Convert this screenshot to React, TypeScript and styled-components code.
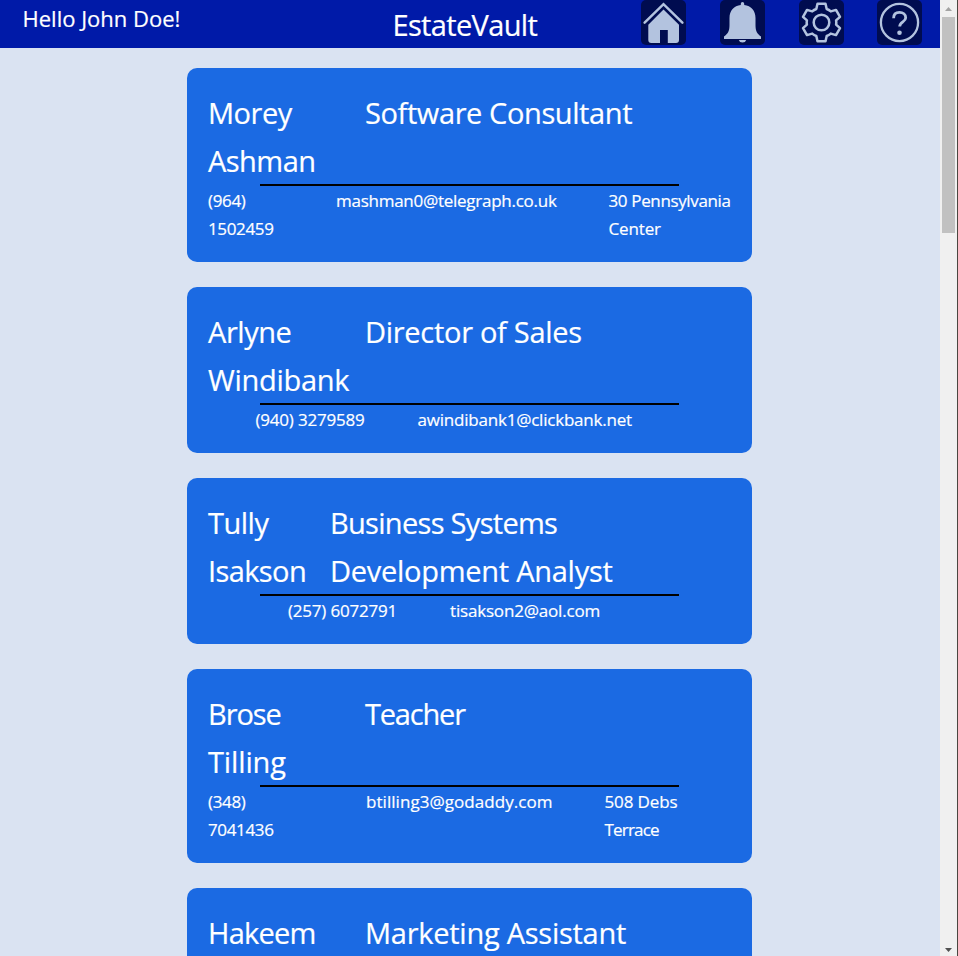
import React from 'react';
import styled, { createGlobalStyle } from 'styled-components';

type Line = [text: string, tracking: number];

interface Contact {
  name: Line[];
  role: Line[];
  phone: Line[];
  email: Line[];
  address?: Line[];
  headColumns: string;
  detailColumns: string;
  detailIndent: number;
}

const contacts: Contact[] = [
  {
    name: [['Morey', -0.47], ['Ashman', -0.53]],
    role: [['Software Consultant', -0.4]],
    phone: [['(964)', -0.33], ['1502459', -0.35]],
    email: [['mashman0@telegraph.co.uk', -0.26]],
    address: [['30 Pennsylvania', -0.36], ['Center', -0.15]],
    headColumns: '157px 1fr',
    detailColumns: '128px 272.5px 1fr',
    detailIndent: 0,
  },
  {
    name: [['Arlyne', -0.45], ['Windibank', -0.3]],
    role: [['Director of Sales', -0.29]],
    phone: [['(940) 3279589', -0.2]],
    email: [['awindibank1@clickbank.net', -0.21]],
    headColumns: '157px 1fr',
    detailColumns: '162px 1fr',
    detailIndent: 47.5,
  },
  {
    name: [['Tully', -0.5], ['Isakson', -0.6]],
    role: [['Business Systems', -0.7], ['Development Analyst', -0.27]],
    phone: [['(257) 6072791', -0.2]],
    email: [['tisakson2@aol.com', -0.18]],
    headColumns: '122px 1fr',
    detailColumns: '162px 1fr',
    detailIndent: 80,
  },
  {
    name: [['Brose', -1.1], ['Tilling', -0.13]],
    role: [['Teacher', -1.2]],
    phone: [['(348)', -0.33], ['7041436', -0.35]],
    email: [['btilling3@godaddy.com', 0.05]],
    address: [['508 Debs', -0.12], ['Terrace', -0.8]],
    headColumns: '157px 1fr',
    detailColumns: '158px 238.5px 1fr',
    detailIndent: 0,
  },
  {
    name: [['Hakeem', -0.75]],
    role: [['Marketing Assistant', -0.26]],
    phone: [],
    email: [],
    headColumns: '157px 1fr',
    detailColumns: '1fr',
    detailIndent: 0,
  },
];

const GlobalStyle = createGlobalStyle`
  body {
    margin: 0;
    overflow: hidden;
    background: #dae3f2;
    font-family: 'Open Sans', sans-serif;
    color: #fff;
    -webkit-text-stroke: 0.2px #fff;
  }
`;

const Shell = styled.div`
  display: grid;
  grid-template-columns: 940px 17px 1px;
  height: 956px;
  overflow: hidden;
`;

const Page = styled.div`
  display: flex;
  flex-direction: column;
  min-width: 0;
  height: 956px;
  overflow: hidden;
`;

const Header = styled.header`
  flex: none;
  display: grid;
  grid-template-columns: 370px 248.5px 281px;
  height: 48px;
  padding-left: 22.5px;
  box-sizing: border-box;
  background: #001aa8;
`;

const Greeting = styled.div`
  font-size: 22px;
  line-height: 36px;
`;

const Brand = styled.h1`
  margin: 0;
  font-size: 29px;
  font-weight: 400;
  line-height: 48px;
  letter-spacing: -0.66px;
  padding-top: 1px;
`;

const Nav = styled.nav`
  display: grid;
  grid-template-columns: 79px 79px 78px 45px;
`;

const NavButton = styled.button`
  width: 45px;
  height: 45px;
  padding: 0;
  border: 0;
  border-radius: 5px;
  background: #000c50;
  color: #b3c3df;

  svg {
    display: block;
  }
`;

const List = styled.main`
  display: flex;
  flex-direction: column;
  gap: 25px;
  padding: 20px 188px 0 187px;
`;

const Card = styled.article`
  flex: none;
  padding: 21px 20px 19px 21px;
  border-radius: 10px;
  background: #1b6ae3;
`;

const CardHead = styled.div<{ $columns: string }>`
  display: grid;
  grid-template-columns: ${(p) => p.$columns};
  font-size: 29px;
  line-height: 48px;
`;

const Rule = styled.hr`
  width: 419px;
  height: 2px;
  margin: -1px 0 1px 52px;
  border: 0;
  background: #000;
`;

const Details = styled.div<{ $columns: string; $indent: number }>`
  display: grid;
  grid-template-columns: ${(p) => p.$columns};
  padding-left: ${(p) => p.$indent}px;
  font-size: 17px;
  line-height: 28px;
`;

const TextLine = styled.div<{ $tracking: number }>`
  white-space: nowrap;
  letter-spacing: ${(p) => p.$tracking}px;
`;

const Scrollbar = styled.div`
  display: flex;
  flex-direction: column;
  align-items: center;
  background: #f0f0f0;
`;

const ScrollArrow = styled.svg`
  flex: none;
  display: block;
`;

const Thumb = styled.div`
  width: 13px;
  height: 216px;
  background: #c1c1c1;
`;

const Track = styled.div`
  flex: 1;
`;

const WindowEdge = styled.div`
  background: #4a4640;
`;

function Lines({ lines }: { lines: Line[] }) {
  return (
    <div>
      {lines.map(([text, tracking]) => (
        <TextLine key={text} $tracking={tracking}>
          {text}
        </TextLine>
      ))}
    </div>
  );
}

function HomeIcon() {
  return (
    <svg width="45" height="45" viewBox="0 0 45 45" fill="currentColor">
      <path d="M3.6 22.6 22.5 4.2 41.4 22.6" fill="none" stroke="currentColor" strokeWidth="2.5" strokeLinecap="round" />
      <path d="M22.5 9.5 38 24.7V40a3 3 0 0 1-3 3H26.8V30H19V43H10.3a3 3 0 0 1-3-3V24.7Z" />
    </svg>
  );
}

function BellIcon() {
  return (
    <svg width="45" height="45" viewBox="0 0 45 45" fill="currentColor">
      <path d="M22.5 2a1.7 1.7 0 0 1 1.7 1.7V5C31 5.700 35.5 10.5 35.5 18V25C35.5 31 37 33.5 41 36.5V39H4V36.5C8 33.5 9.5 31 9.5 25V18C9.5 10.5 14 5.7 20.8 5V3.700A1.7 1.7 0 0 1 22.5 2Z" />
      <path d="M18.8 40h7.4a3.8 3.3 0 0 1-7.4 0Z" />
    </svg>
  );
}

function GearIcon() {
  return (
    <svg width="45" height="45" viewBox="0 0 45 45" fill="none" stroke="currentColor" strokeWidth="2.5" strokeLinejoin="round">
      <circle cx="22.5" cy="22.5" r="7.8" />
      <path d="M18.5 3.800H26.5L27.7 9Q30 9.800 31.8 11.4L37 9.900 41 16.8 37.1 20.4Q37.500 22.500 37.1 24.6L41 28.2 37 35.1 31.8 33.6Q30 35.2 27.7 36L26.5 41.2H18.5L17.3 36Q15 35.2 13.2 33.6L8 35.1 4 28.2 7.900 24.6Q7.500 22.500 7.900 20.4L4 16.8 8 9.900 13.2 11.4Q15 9.800 17.3 9Z" />
    </svg>
  );
}

function HelpIcon() {
  return (
    <svg width="45" height="45" viewBox="0 0 45 45" fill="none" stroke="currentColor">
      <circle cx="22.5" cy="22.5" r="18.6" strokeWidth="2.3" />
      <path d="M16.6 18.2C16.6 14.5 19 12.4 22.5 12.4S28.700 14.5 28.700 17.7C28.700 22 22.700 21.7 22.700 26.6" strokeWidth="2.8" />
      <circle cx="22.5" cy="32.8" r="2.3" fill="currentColor" stroke="none" />
    </svg>
  );
}

const navItems = [
  { label: 'Home', Icon: HomeIcon },
  { label: 'Notifications', Icon: BellIcon },
  { label: 'Settings', Icon: GearIcon },
  { label: 'Help', Icon: HelpIcon },
];

export default function App() {
  return (
    <Shell>
      <GlobalStyle />
      <Page>
        <Header>
          <Greeting>Hello John Doe!</Greeting>
          <Brand>EstateVault</Brand>
          <Nav>
            {navItems.map(({ label, Icon }) => (
              <NavButton key={label} aria-label={label}>
                <Icon />
              </NavButton>
            ))}
          </Nav>
        </Header>
        <List>
          {contacts.map((c) => (
            <Card key={c.name[0][0]}>
              <CardHead $columns={c.headColumns}>
                <Lines lines={c.name} />
                <Lines lines={c.role} />
              </CardHead>
              <Rule />
              <Details $columns={c.detailColumns} $indent={c.detailIndent}>
                <Lines lines={c.phone} />
                <Lines lines={c.email} />
                {c.address && <Lines lines={c.address} />}
              </Details>
            </Card>
          ))}
        </List>
      </Page>
      <Scrollbar>
        <ScrollArrow width="17" height="17" viewBox="0 0 17 17">
          <path d="M5 11 8.5 7 12 11Z" fill="#a3a3a3" />
        </ScrollArrow>
        <Thumb />
        <Track />
        <ScrollArrow width="17" height="17" viewBox="0 0 17 17">
          <path d="M5 9 8.5 13 12 9Z" fill="#505050" />
        </ScrollArrow>
      </Scrollbar>
      <WindowEdge />
    </Shell>
  );
}
